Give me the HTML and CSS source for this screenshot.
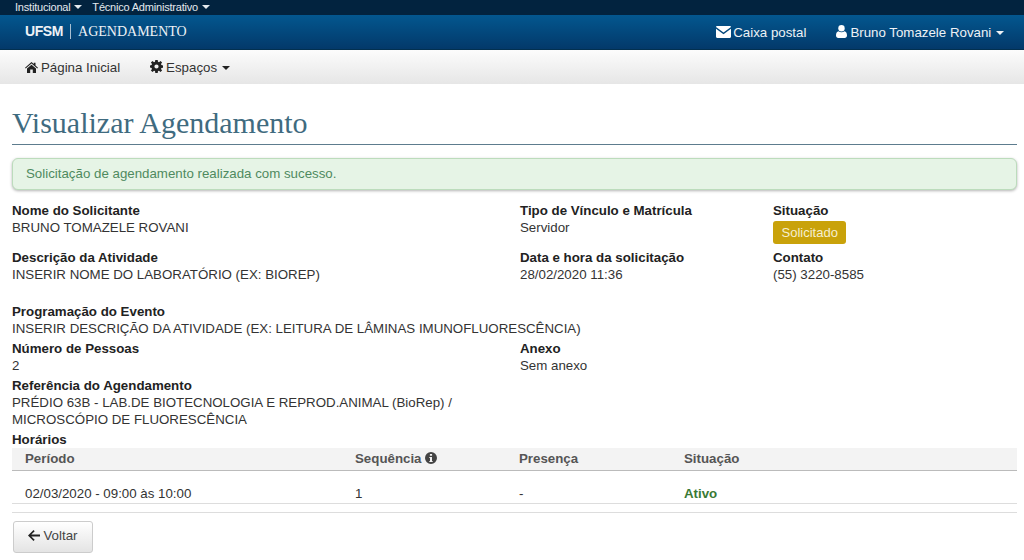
FILE: index.html
```html
<!DOCTYPE html>
<html lang="pt-BR">
<head>
<meta charset="utf-8">
<title>Visualizar Agendamento</title>
<link rel="stylesheet" href="styles.css">
</head>
<body>
<header>
  <div class="topbar">
    <a>Institucional <i class="caret"></i></a>
    <a>Técnico Administrativo <i class="caret"></i></a>
  </div>
  <div class="brandbar">
    <div class="brand"><b>UFSM</b><span class="sep"></span><span class="app">AGENDAMENTO</span></div>
    <div class="usernav">
      <a><svg class="ic mail" width="15" height="12" viewBox="0 0 15 12"><path fill="#fff" d="M1.2 0h12.6c.7 0 1.2.5 1.2 1.1L7.5 6.6 0 1.1C0 .5.5 0 1.2 0zM0 2.8l7.5 5.4L15 2.8v8c0 .7-.5 1.2-1.2 1.2H1.2C.5 12 0 11.500 0 10.800z"/></svg>Caixa postal</a>
      <a><svg class="ic" width="11" height="13" viewBox="0 0 11 13"><circle cx="5.500" cy="3.300" r="3.200" fill="#fff"/><path fill="#fff" d="M2.500 6.200c.8.600 1.900 1 3 1s2.200-.4 3-1C10 6.400 11 7.800 11 10.500c0 1.600-1 2.500-2.300 2.500H2.300C1 13 0 12.100 0 10.500c0-2.700 1-4.100 2.500-4.300z"/></svg>Bruno Tomazele Rovani <i class="caret big"></i></a>
    </div>
  </div>
  <nav class="menu">
    <a><svg class="ic" width="13" height="11" viewBox="0 0 13 11"><path fill="#222" d="M6.500 0l2.300 2V.8h1.700v2.700L13 5.700l-.7.800-5.800-5-5.800 5L0 5.700zM2 6.600l4.500-3.900L11 6.600V11H7.800V7.600H5.200V11H2z"/></svg>Página Inicial</a>
    <a><svg class="ic" width="13" height="13" viewBox="0 0 13 13"><path fill="#222" fill-rule="evenodd" d="M5.300 0h2.400l.3 1.800 1 .4L10.500 1l1.600 1.600L11 4.100l.4 1 1.600.3v2.300l-1.600.3-.4 1 1.100 1.500-1.600 1.600L9 10.700l-1 .4-.3 1.900H5.300L5 11.100l-1-.4L2.500 12 .9 10.400 2 8.900l-.4-1L0 7.600V5.400l1.600-.3.4-1L.9 2.600 2.500 1 4 2.200l1-.4zM6.500 4.400a2.100 2.100 0 1 0 0 4.200 2.100 2.100 0 0 0 0-4.200z"/></svg>Espaços <i class="caret dark"></i></a>
  </nav>
</header>
<main>
  <h1>Visualizar Agendamento</h1>
  <div class="alert">Solicitação de agendamento realizada com sucesso.</div>
  <section class="details">
    <div class="field r1"><strong>Nome do Solicitante</strong><span>BRUNO TOMAZELE ROVANI</span></div>
    <div class="field r1"><strong>Tipo de Vínculo e Matrícula</strong><span>Servidor</span></div>
    <div class="field r1"><strong>Situação</strong><span class="badge">Solicitado</span></div>
    <div class="field r2"><strong>Descrição da Atividade</strong><span>INSERIR NOME DO LABORATÓRIO (EX: BIOREP)</span></div>
    <div class="field r2"><strong>Data e hora da solicitação</strong><span>28/02/2020 11:36</span></div>
    <div class="field r2"><strong>Contato</strong><span>(55) 3220-8585</span></div>
    <div class="field wide r3"><strong>Programação do Evento</strong><span>INSERIR DESCRIÇÃO DA ATIVIDADE (EX: LEITURA DE LÂMINAS IMUNOFLUORESCÊNCIA)</span></div>
    <div class="field r4"><strong>Número de Pessoas</strong><span>2</span></div>
    <div class="field r4 span2"><strong>Anexo</strong><span>Sem anexo</span></div>
    <div class="field wide r5"><strong>Referência do Agendamento</strong><span class="ref">PRÉDIO 63B - LAB.DE BIOTECNOLOGIA E REPROD.ANIMAL (BioRep) / MICROSCÓPIO DE FLUORESCÊNCIA</span></div>
  </section>
  <h2>Horários</h2>
  <table>
    <thead>
      <tr><th class="c1">Período</th><th class="c2">Sequência <svg class="info" width="12" height="12" viewBox="0 0 12 12"><path fill="#444" fill-rule="evenodd" d="M6 0a6 6 0 1 1 0 12A6 6 0 0 1 6 0zM4.900 1.900v1.800h2.200V1.900zM4.300 4.900v1.100h.7v3H4.300v1.100h3.400V9H7V4.900z"/></svg></th><th class="c3">Presença</th><th>Situação</th></tr>
    </thead>
    <tbody>
      <tr><td>02/03/2020 - 09:00 às 10:00</td><td>1</td><td>-</td><td class="ok">Ativo</td></tr>
    </tbody>
  </table>
  <hr>
  <button type="button"><svg class="ic" width="12" height="11" viewBox="0 0 12 11"><path fill="#222" d="M5.500 0l1.200 1.200L3.300 4.500H12v2H3.300l3.400 3.300L5.500 11 0 5.500z"/></svg>Voltar</button>
</main>
</body>
</html>
```
FILE: styles.css
```css
* { box-sizing: border-box; }
html, body { margin: 0; padding: 0; }
body {
  width: 1024px;
  height: 560px;
  overflow: hidden;
  background: #fff;
  color: #333;
  font: 13.3px/17px "Liberation Sans", Arial, sans-serif;
}
.topbar {
  height: 15px;
  background: #02233f;
  color: #e4e9ee;
  display: flex;
  gap: 10px;
  padding-left: 15px;
  font-size: 11px;
  line-height: 14px;
  letter-spacing: -0.2px;
}
.caret {
  display: inline-block;
  width: 0;
  height: 0;
  margin-left: 1px;
  vertical-align: 2px;
  border-left: 4px solid transparent;
  border-right: 4px solid transparent;
  border-top: 4px solid currentColor;
}
.caret.big { border-width: 4px 4px 0; }
.caret.dark { border-width: 4px 4px 0; color: #222; }
.brandbar {
  height: 35px;
  background: linear-gradient(#03578f, #03396a);
  border-bottom: 1px solid #023050;
  display: flex;
  align-items: center;
  justify-content: space-between;
  padding: 0 20px 2px 25px;
  color: #eef2f6;
}
.brand { display: flex; align-items: center; font-family: "Liberation Serif", serif; font-size: 14px; }
.brand b { font: bold 14px "Liberation Sans", sans-serif; letter-spacing: -0.4px; }
.sep { width: 1px; height: 15px; background: #a9bfd1; margin: 0 7px; }
.usernav { display: flex; gap: 30px; padding-top: 2px; }
.usernav .ic { margin-right: 3px; vertical-align: -1px; }
.usernav .mail { margin-right: 2px; }
.menu {
  height: 34px;
  background: linear-gradient(#fcfcfc, #e6e6e6);
  display: flex;
  align-items: center;
  gap: 30px;
  padding: 0 25px;
  color: #333;
}
.menu .ic { margin-right: 3px; vertical-align: -1px; }
main { padding: 0 7px 0 12px; }
h1 {
  margin: 23px 0 0;
  height: 38px;
  border-bottom: 1px solid #5d7c8e;
  font: 400 30px/32px "Liberation Serif", serif;
  color: #3f6b80;
}
.alert {
  margin-top: 13px;
  height: 32px;
  padding: 6px 13px;
  border: 1px solid #bcdcbc;
  border-radius: 6px;
  background: #e6f4e6;
  color: #4f8a5f;
  box-shadow: 0 1px 3px rgba(0, 0, 0, .3);
}
.details {
  display: grid;
  grid-template-columns: 508px 253px 1fr;
  margin-top: 12px;
}
.field { display: flex; flex-direction: column; align-items: flex-start; }
.field strong { color: #222; }
.r1 { height: 47px; }
.r2 { height: 54px; }
.r3 { height: 37px; }
.r4 { height: 37px; }
.wide { grid-column: 1 / -1; }
.span2 { grid-column: 2 / -1; }
.r5 { height: 55px; }
.ref { width: 470px; }
.badge {
  margin-top: 2px;
  height: 23px;
  padding: 3px 8.500px;
  border-radius: 3px;
  background: #c9a20a;
  color: #f6efcf;
  font-size: 13px;
}
h2 { margin: 0; font-size: 13.3px; line-height: 16px; color: #222; font-weight: 700; }
table { width: 100%; border-collapse: collapse; border-bottom: 1px solid #ddd; }
th {
  text-align: left;
  height: 22px;
  padding: 0 13px;
  background: #f3f3f3;
  border-bottom: 1px solid #bbb;
  color: #555;
}
td { height: 33px; padding: 13px 13px 0; }
.c1 { width: 330px; }
.c2 { width: 164px; }
.c3 { width: 165px; }
.info { vertical-align: -1px; }
.ok { color: #3a7a34; font-weight: 700; }
hr { margin: 8px 0 0; border: 0; border-top: 1px solid #ddd; }
button {
  display: block;
  margin: 8px 0 0 1px;
  width: 80px;
  height: 32px;
  padding: 0 0 3px;
  border: 1px solid #ccc;
  border-radius: 3px;
  background: linear-gradient(#fff, #e4e4e4);
  font: 13.3px "Liberation Sans", sans-serif;
  color: #444;
}
button .ic { margin-right: 3px; vertical-align: -1px; }
```
